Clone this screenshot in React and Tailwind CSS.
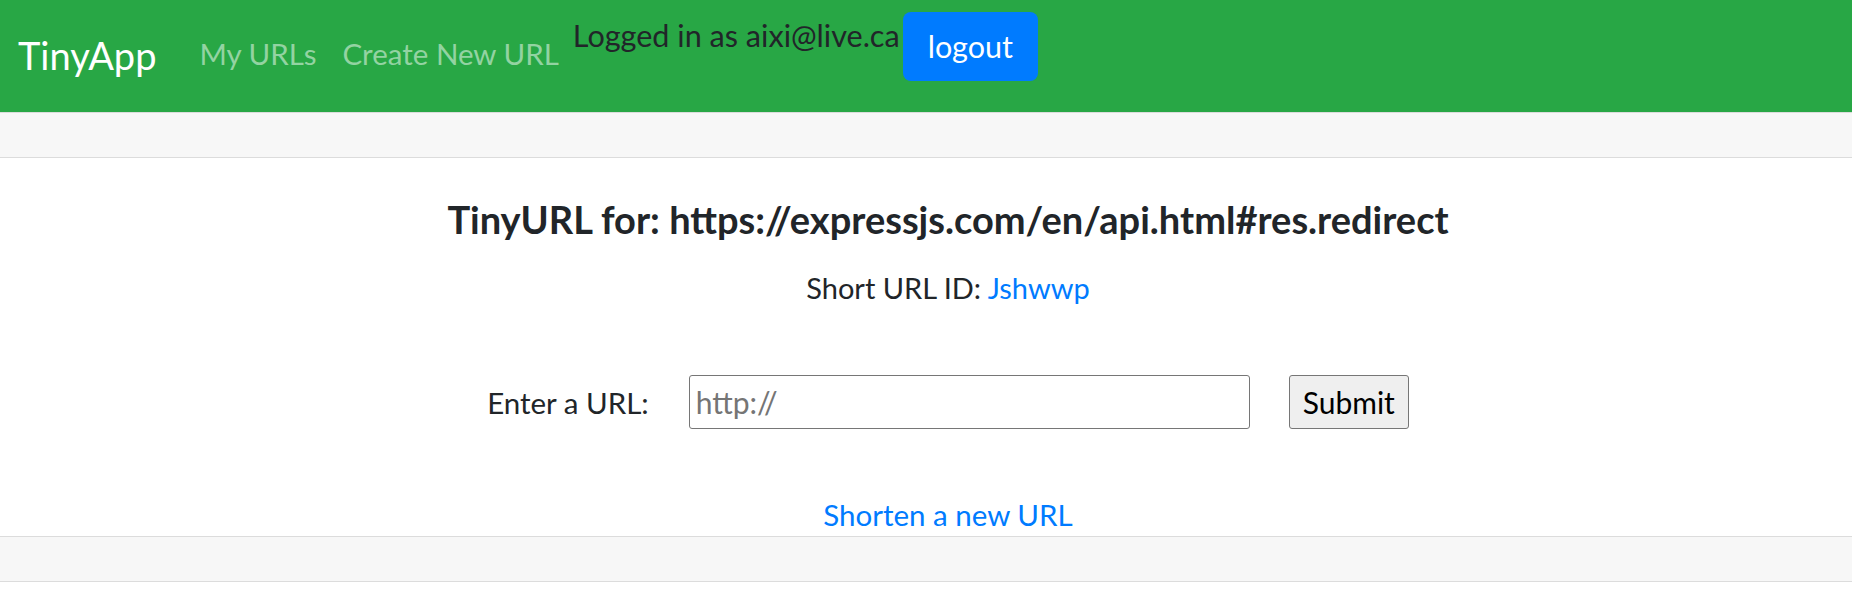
import { useState } from 'react'

export default function App() {
  const [url, setUrl] = useState('')

  return (
    <div className="min-h-[608px] bg-white text-[#212529] font-['Lato',_'Noto_Sans',_sans-serif]">
      {/* Navbar */}
      <nav className="h-[112px] bg-[#28a745] flex items-start">
        <a href="#" className="ml-[18px] mt-[33px] text-[38px] leading-[45px] text-white">TinyApp</a>
        <a href="#" className="ml-[43px] mt-[31px] text-[29.5px] leading-[45px] text-[#93d3a2]">My URLs</a>
        <a href="#" className="ml-[26px] mt-[31px] text-[29.5px] leading-[45px] text-[#93d3a2]">Create New URL</a>
        <span className="ml-[14px] mt-[13px] text-[30.6px] leading-[45px] text-[#212529]">Logged in as aixi@live.ca</span>
        <button className="ml-[3px] mt-[12px] h-[69px] px-[25px] rounded-[8px] bg-[#007bff] text-white text-[30.5px] leading-[45px]">
          logout
        </button>
      </nav>

      {/* top band */}
      <div className="h-[46px] bg-[#f7f7f7] border-y border-[#dcdcdc]" />

      {/* main */}
      <main className="h-[378px] pl-[44px] flex flex-col items-center">
        <h5 className="mt-[39px] text-[38px] leading-[45px] font-bold">
          TinyURL for: https://expressjs.com/en/api.html#res.redirect
        </h5>
        <p className="mt-[23px] text-[29px] leading-[45px]">
          Short URL ID: <a href="#" className="text-[#007bff]">Jshwwp</a>
        </p>
        <form className="mt-[65px] flex items-center" onSubmit={e => e.preventDefault()}>
          <label className="text-[29.5px] leading-[45px]">Enter a URL:</label>
          <input
            value={url}
            onChange={e => setUrl(e.target.value)}
            placeholder="http://"
            className="ml-[40px] w-[561px] h-[54px] px-[6px] border border-[#767676] rounded-[3px] text-[30px] placeholder:text-[#757575] outline-none"
          />
          <button className="ml-[39px] h-[54px] px-[13px] bg-[#efefef] border border-[#767676] rounded-[3px] text-[30px] text-black">
            Submit
          </button>
        </form>
        <a href="#" className="mt-[63px] text-[29.5px] leading-[45px] text-[#007bff]">Shorten a new URL</a>
      </main>

      {/* bottom band */}
      <div className="h-[46px] bg-[#f7f7f7] border-y border-[#dcdcdc]" />
    </div>
  )
}
